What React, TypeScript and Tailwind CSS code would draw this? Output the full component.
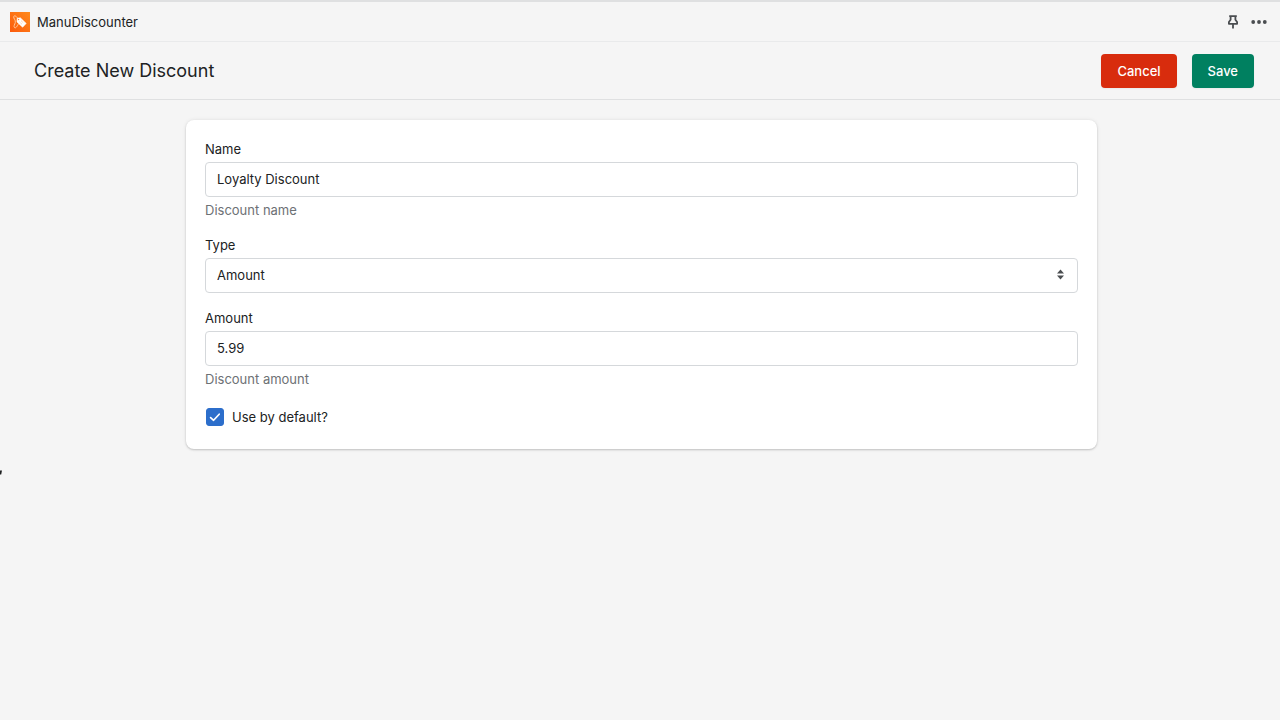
import React, { useState } from 'react';

const fieldClass =
  "block w-full h-[35px] px-[11px] pb-0.5 bg-white border border-[#d5d8db] rounded text-[13px] leading-5 text-[#202223] focus:outline-none focus:ring-2 focus:ring-blue-500/20";

function AppLogo() {
  return (
    <svg className="w-5 h-5" viewBox="0 0 20 20" fill="none" aria-hidden="true">
      <defs>
        <linearGradient id="logo" x1="1" y1="0" x2="0" y2="1">
          <stop offset="0" stopColor="#ff8a1c" />
          <stop offset="1" stopColor="#fb5a0c" />
        </linearGradient>
      </defs>
      <rect width="20" height="20" fill="url(#logo)" />
      {/* string */}
      <path d="M8.500 7.500C7 4.500 4.500 2.800 3.700 4.600C3.300 6.500 5.800 7.800 5.300 10.500C4.800 12.500 3.200 14.500 4.700 15.700C6.500 16.500 7.200 13 9 11.500" stroke="#ffd0a8" strokeWidth=".9" />
      {/* tag */}
      <path d="M7.200 6.400L10.300 5.800L16.200 11.400L12.600 15.200L7 9.900Z" fill="#fff" stroke="#fff" strokeWidth=".6" strokeLinejoin="round" />
      <circle cx="8.600" cy="7.600" r=".7" fill="#fb7a20" />
      <path d="M9.600 10L12 12.300M11 8.600L13.400 10.900" stroke="#ffb27d" strokeWidth=".7" strokeDasharray="1.200 .6" />
    </svg>
  );
}

export default function App() {
  const [name, setName] = useState("Loyalty Discount");
  const [type, setType] = useState("Amount");
  const [amount, setAmount] = useState("5.99");
  const [isDefault, setIsDefault] = useState(true);

  return (
    <div className="relative min-h-screen bg-[#f5f5f5] text-[#202223] text-[13px] leading-5 font-['Inter',sans-serif]">
      {/* --- App Bar --- */}
      <header className="flex items-center justify-between h-[42px] pl-2.5 pr-[13px] border-t-2 border-b border-t-[#dfe0e1] border-b-[#e9eaeb]">
        <div className="flex items-center gap-[7px]">
          <AppLogo />
          <span>ManuDiscounter</span>
        </div>
        <div className="flex items-center gap-2.5 text-[#4a4d50]">
          <button type="button" aria-label="Pin app" className="cursor-pointer">
            <svg className="w-4 h-4" viewBox="0 0 16 16" fill="none" stroke="currentColor" strokeWidth="1.8" strokeLinejoin="round" aria-hidden="true">
              <path d="M4.200 2.200H11.800M5.600 2.200V5.800L3.900 8V9.800H12.100V8L10.400 5.800V2.200M8 9.800V14.500" />
            </svg>
          </button>
          <button type="button" aria-label="More actions" className="cursor-pointer">
            <svg className="w-4 h-4" viewBox="0 0 16 16" fill="currentColor" aria-hidden="true">
              <circle cx="2.200" cy="8" r="1.900" />
              <circle cx="8" cy="8" r="1.900" />
              <circle cx="13.800" cy="8" r="1.900" />
            </svg>
          </button>
        </div>
      </header>

      {/* --- Title Bar --- */}
      <section className="flex items-center justify-between h-[58px] pt-px pl-[34px] pr-[26px] border-b border-[#dfe0e1]">
        <h1 className="text-lg leading-6">Create New Discount</h1>
        <div className="flex gap-[15px] font-medium text-white">
          <button type="button" className="h-[34px] px-4 rounded bg-[#d82c0d] shadow-xs cursor-pointer hover:bg-[#bc2200]">
            Cancel
          </button>
          <button type="submit" form="discount" className="h-[34px] px-4 rounded bg-[#008060] shadow-xs cursor-pointer hover:bg-[#006e52]">
            Save
          </button>
        </div>
      </section>

      {/* --- Discount Form --- */}
      <main className="py-5 pl-[3px]">
        <form
          id="discount"
          onSubmit={(e) => e.preventDefault()}
          className="max-w-[911px] mx-auto p-[19px] flex flex-col gap-[15px] bg-white rounded-lg shadow-[0_0_4px_rgba(23,24,24,0.08),0_1px_2px_rgba(0,0,0,0.18)]"
        >
          <div className="flex flex-col gap-[3px]">
            <label htmlFor="name">Name</label>
            <input id="name" type="text" value={name} onChange={(e) => setName(e.target.value)} className={fieldClass} />
            <p className="text-[#6d7175]">Discount name</p>
          </div>

          <div className="flex flex-col gap-[3px]">
            <label htmlFor="type">Type</label>
            <div className="relative">
              <select id="type" value={type} onChange={(e) => setType(e.target.value)} className={`${fieldClass} appearance-none`}>
                <option>Amount</option>
                <option>Percentage</option>
              </select>
              <svg className="absolute right-3 top-[11px] w-[11px] h-[11px] pointer-events-none text-[#4a4d50]" viewBox="0 0 11 11" fill="currentColor" aria-hidden="true">
                <path d="M5.500 0.500L9 4.500H2Z" />
                <path d="M5.500 10.500L9 6.500H2Z" />
              </svg>
            </div>
          </div>

          <div className="flex flex-col gap-[3px]">
            <label htmlFor="amount">Amount</label>
            <input id="amount" type="text" inputMode="decimal" value={amount} onChange={(e) => setAmount(e.target.value)} className={fieldClass} />
            <p className="text-[#6d7175]">Discount amount</p>
          </div>

          <label className="flex items-center gap-2 h-[26px] pl-px">
            <span className="relative w-[18px] h-[18px]">
              <input
                type="checkbox"
                checked={isDefault}
                onChange={(e) => setIsDefault(e.target.checked)}
                className="peer block w-full h-full appearance-none rounded-[3px] border border-[#8c9196] checked:border-[#2c6ecb] checked:bg-[#2c6ecb]"
              />
              <svg className="absolute inset-0 w-[18px] h-[18px] pointer-events-none hidden peer-checked:block" viewBox="0 0 18 18" fill="none" stroke="#fff" strokeWidth="1.7" strokeLinecap="round" strokeLinejoin="round" aria-hidden="true">
                <path d="M4.600 9.600L7.600 12.300L13.200 6.200" />
              </svg>
            </span>
            Use by default?
          </label>
        </form>
      </main>

      {/* Sliver of the collapsed side panel */}
      <svg className="absolute left-0 top-[470px] w-[2px] h-[6px]" viewBox="0 0 2 6" fill="#202223" aria-hidden="true">
        <path d="M0 .5H2L1.200 4.500H0Z" />
      </svg>
    </div>
  );
}
